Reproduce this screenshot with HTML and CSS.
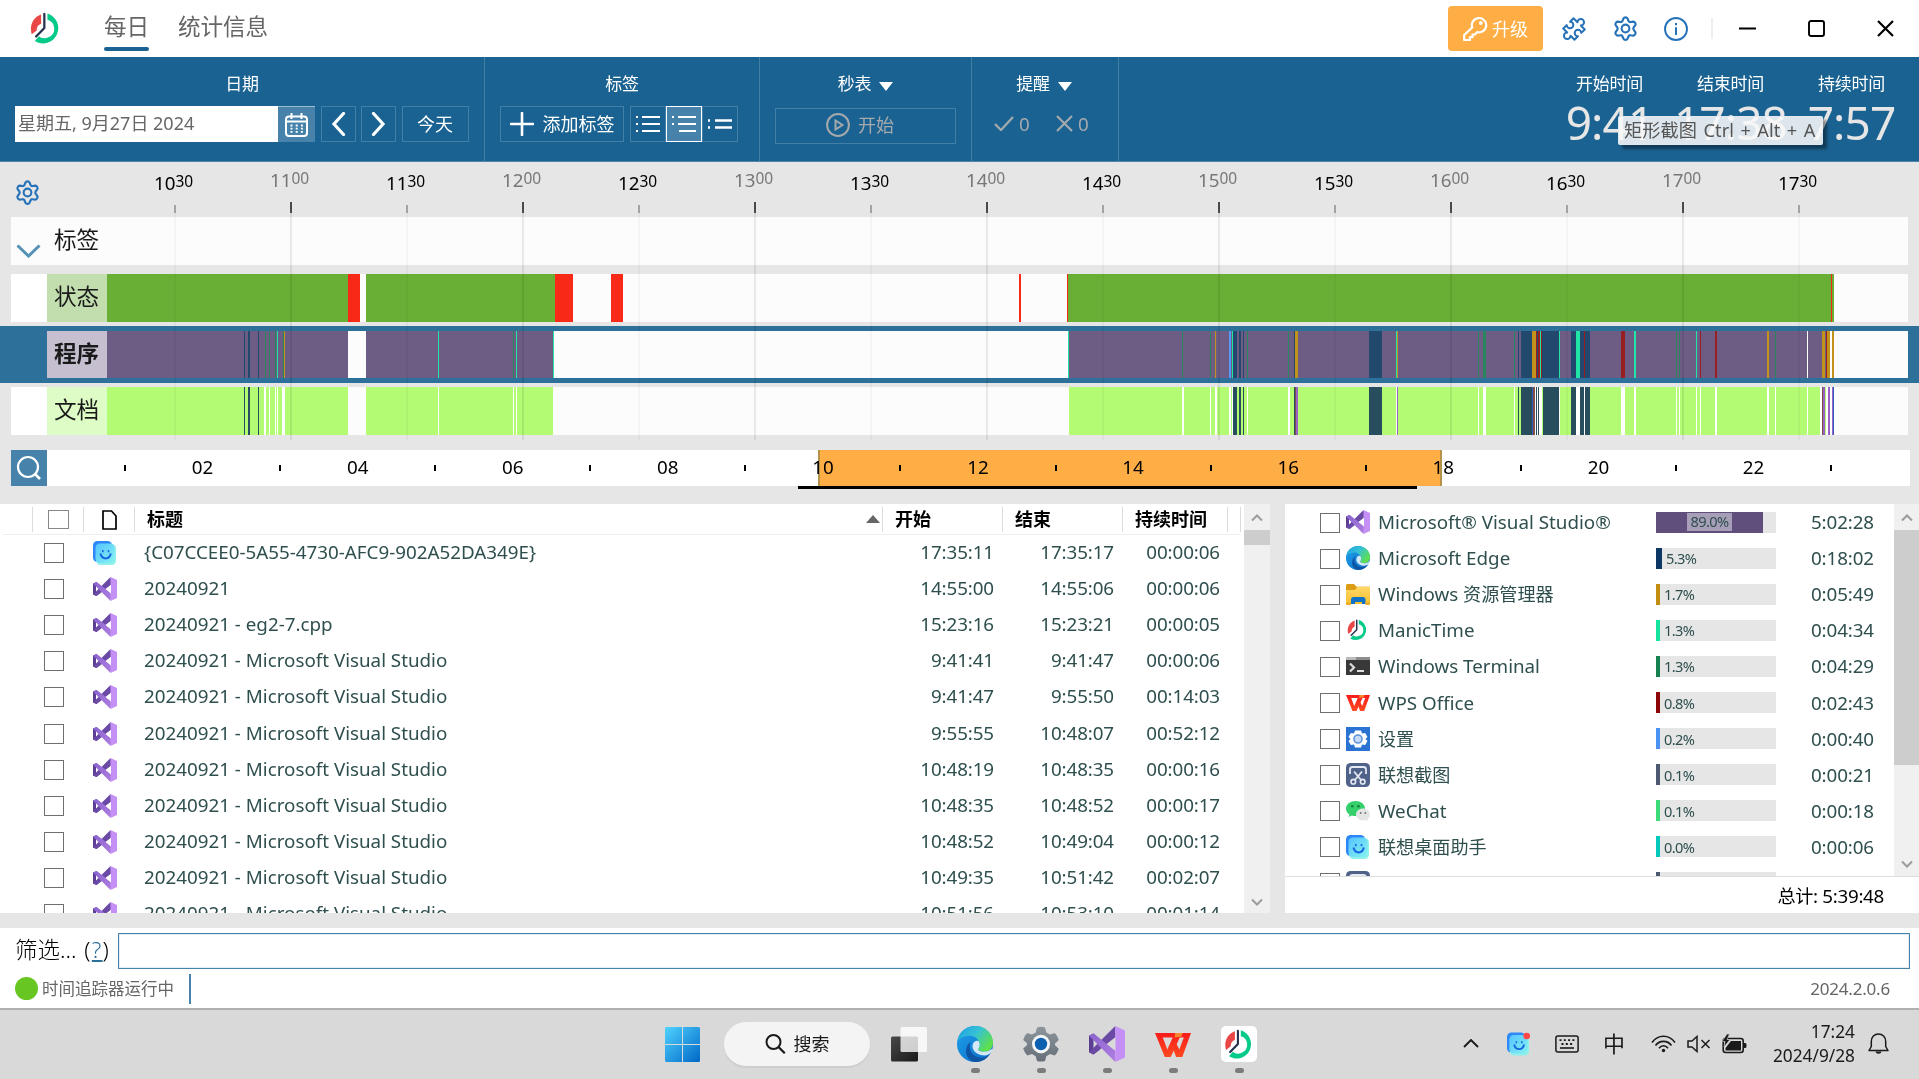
FILE: index.html
```html
<!DOCTYPE html>
<html lang="zh-CN">
<head>
<meta charset="utf-8">
<title>ManicTime</title>
<link rel="stylesheet" href="styles.css">
</head>
<body>
<svg class="defs" width="0" height="0" aria-hidden="true">
  <defs>
    <linearGradient id="g-edge1" x1="0" y1="0" x2="1" y2=".6"><stop offset="0" stop-color="#1b9de2"/><stop offset=".5" stop-color="#35c1d6"/><stop offset="1" stop-color="#5fe04b"/></linearGradient>
    <linearGradient id="g-edge2" x1="0" y1="0" x2="1" y2="1"><stop offset="0" stop-color="#1fa0ea"/><stop offset="1" stop-color="#0a6cc8"/></linearGradient>
    <linearGradient id="g-win" x1="0" y1="0" x2="1" y2="1"><stop offset="0" stop-color="#4fd3ff"/><stop offset="1" stop-color="#0067c6"/></linearGradient>
    <linearGradient id="g-folder" x1="0" y1="0" x2="0" y2="1"><stop offset="0" stop-color="#ffd867"/><stop offset="1" stop-color="#f9be2e"/></linearGradient>
    <linearGradient id="g-smile" x1="0" y1="0" x2="1" y2="1"><stop offset="0" stop-color="#55c3ff"/><stop offset="1" stop-color="#86f3f0"/></linearGradient>
    <linearGradient id="g-vs" x1="0" y1="0" x2="1" y2="1"><stop offset="0" stop-color="#8a63cf"/><stop offset="1" stop-color="#b07fe0"/></linearGradient>
    <linearGradient id="g-wps" x1="0" y1="0" x2="0" y2="1"><stop offset="0" stop-color="#f81b1b"/><stop offset="1" stop-color="#ff4a20"/></linearGradient>
    <linearGradient id="g-cog" x1="0" y1="0" x2="0" y2="1"><stop offset="0" stop-color="#8d969c"/><stop offset="1" stop-color="#666f78"/></linearGradient>
    <linearGradient id="g-dark" x1="0" y1="0" x2="1" y2="1"><stop offset="0" stop-color="#484848"/><stop offset="1" stop-color="#181818"/></linearGradient>
  </defs>
  <symbol id="manic" viewBox="0 0 32 34">
    <path d="M18 1.500A15.800 15.800 0 1 1 5 30L9.200 25C12 27.500 16 27.500 19 26A9.500 9.500 0 0 0 18 8z" fill="#04ca8a"/>
    <path d="M11.500 2.500C2.500 5.500-.8 15 1.800 23L7 19C6.800 15.500 8.300 13 11.500 12z" fill="#ea4747"/>
    <path d="M14.800 2v14.500L6.300 25.200" fill="none" stroke="#25304f" stroke-width="2.300" stroke-linecap="round"/>
  </symbol>
  <symbol id="vs" viewBox="0 0 24 24">
    <path d="M0 6.500L3.500 5 7.500 8.800V15.500L3.500 19 0 17.500z" fill="#5c3f92"/>
    <path d="M3 8.500v7l3.600-3.500z" fill="#fff"/>
    <path d="M0 17.500L17.500 0 19 7.500 3.500 19z" fill="#6b4aa5"/>
    <path d="M0 6.500L3.500 5 19 16.500 17.500 24z" fill="url(#g-vs)"/>
    <path d="M17.500 0L24 3v18l-6.500 3z" fill="#c490f5"/>
    <path d="M18 7.800v8.600L12.500 12z" fill="#fff"/>
  </symbol>
  <symbol id="edge" viewBox="0 0 24 24">
    <circle cx="12" cy="12" r="12" fill="url(#g-edge2)"/>
    <path d="M.2 10.500C1.300 3.800 6.500 0 12.200 0 19 0 24 5 24 11c0 3.800-2.600 6.200-6 6.200-2.600 0-4-1-3.700-2 .9-1 1-2 .8-3C14.700 8 11 6.300 8 6.500 4.500 6.700 1.500 8.300.2 10.500z" fill="url(#g-edge1)"/>
    <path d="M8.500 13c-.4 5 4 8.500 8.500 8 2.500-.3 4.300-1.500 5.300-3.200C20.500 21.800 16.500 24 12 24 8 23.500 5.500 19.500 6.200 15.500 6.500 13 7.800 11 9.800 10.300 9 11 8.600 12 8.500 13z" fill="#0f55a5"/>
    <path d="M14.300 10c1.200 1.700 1.100 3.800 0 5.200-.5 1.200 1.200 2 3.700 2 2 0 4-.6 5-2l.4 1.200c-1.300 3-4.500 3.800-7.500 3-4-.9-6.800-4.500-5-8 .7-1.300 2-2 3.400-1.400z" fill="#fff" opacity=".82"/>
  </symbol>
  <symbol id="folder" viewBox="0 0 24 24">
    <path d="M0 3.500C0 2.500.8 2 1.600 2H8l2.500 2.700H24v6H0z" fill="#dc9c14"/>
    <path d="M0 8h9l2.500-3.300H24V22H0z" fill="url(#g-folder)"/>
    <path d="M5 22v-4.500C5 16 6 15 7.500 15h9.500c1.500 0 2.500 1 2.500 2.500V22h-3.500v-2H9v2z" fill="#1272c4"/>
    <path d="M0 20.500h5V23H0zM19.500 20.500H24V23h-4.500z" fill="#ecae2c"/>
  </symbol>
  <symbol id="term" viewBox="0 0 24 24">
    <path d="M0 4.500C0 3.500.6 3 1.500 3h21c.9 0 1.500.5 1.500 1.500V21H0z" fill="#383838"/>
    <path d="M0 3h24v3H0z" fill="#8d8d8d"/><path d="M0 3h10v3H0z" fill="#bbb"/>
    <path d="M4 9.500l4 4-4 4" fill="none" stroke="#ddd" stroke-width="2.200"/><path d="M11 17h7" stroke="#ddd" stroke-width="2"/>
  </symbol>
  <symbol id="wps" viewBox="0 0 24 16">
    <path d="M0 0h17.500l-.8 3H5.200l3 8L11.800 3h4.700L10.500 16H6.500z" fill="url(#g-wps)"/>
    <path d="M11 5.500L13.500 0H24l-5.800 16h-4.100L11.600 9.500l1.800-4 2.800 5.500 3-8h-4.600l-1.400 3z" fill="url(#g-wps)"/>
    <path d="M13.500 0h5l-1 2.500-4.500.5z" fill="#f9862e"/>
  </symbol>
  <symbol id="sett" viewBox="0 0 24 24">
    <path d="M0 0h24v24H0z" fill="#2b73d2"/>
    <path d="M9 3.500h6l1 3 3.200-.6 2.300 4.100-2 2 2 2-2.300 4.100-3.200-.6-1 3H9l-1-3-3.200.6L2.500 14l2-2-2-2 2.300-4.100 3.200.6z" fill="#fff"/>
    <circle cx="12" cy="12" r="4" fill="#c9dbf4" stroke="#5e94de" stroke-width="1.600"/>
  </symbol>
  <symbol id="snip" viewBox="0 0 24 24">
    <rect width="24" height="24" rx="4.500" fill="#50618a"/>
    <path d="M4 11V6.500C4 5 5 4 6.500 4h11C19 4 20 5 20 6.500V11M8 8.500l7.500 9M16 8.500l-7.500 9" fill="none" stroke="#e4e9f2" stroke-width="1.800"/>
    <circle cx="7.300" cy="18.700" r="2.300" fill="none" stroke="#e4e9f2" stroke-width="1.600"/><circle cx="16.700" cy="18.700" r="2.300" fill="none" stroke="#e4e9f2" stroke-width="1.600"/>
  </symbol>
  <symbol id="wechat" viewBox="0 0 24 24">
    <path d="M9.500 2C4.500 2 0 5 0 9.500c0 2.600 1.300 4.500 3.400 5.900L2.500 18l3.300-1.600c1.200.4 2.400.6 3.700.6 5 0 9.500-3 9.500-7.500S14.500 2 9.500 2z" fill="#35cf6c"/>
    <path d="M17 9.500c-3.700 0-7 2.500-7 6s3.300 5.800 7 5.800c.9 0 1.700-.1 2.500-.3l2.600 1.200-.6-2.200c1.600-1 2.500-2.600 2.500-4.500 0-3.500-3.300-6-7-6z" fill="#e4e6e5"/>
    <circle cx="6.300" cy="7.300" r="1.300" fill="#16803c"/><circle cx="12.500" cy="7.300" r="1.300" fill="#16803c"/><circle cx="14.700" cy="14" r="1" fill="#777"/><circle cx="19.300" cy="14" r="1" fill="#777"/>
  </symbol>
  <symbol id="smile" viewBox="0 0 24 24">
    <rect x="0" y="0" width="19" height="21" rx="4.500" fill="#2f88f8"/>
    <rect x="3" y="3" width="20" height="21" rx="4.500" fill="#90f0ea"/>
    <rect x="2.500" y="2.500" width="19" height="19.500" rx="4.500" fill="url(#g-smile)"/>
    <path d="M7.500 12.500c1.300 6.500 9 6.500 10.300 0" fill="none" stroke="#1765df" stroke-width="2"/>
    <path d="M9.800 9v2.200M15.500 9v2.200" stroke="#1765df" stroke-width="1.600"/>
  </symbol>
  <symbol id="gear" viewBox="0 0 24 24">
    <path d="M10.300 1.800c.5-1.100 2.900-1.100 3.400 0l1 2.300c.3.600 1 1 1.700.9l2.500-.3c1.200-.1 2.400 2 1.700 3l-1.500 2c-.4.700-.4 1.400 0 2l1.500 2.100c.7 1-.5 3.100-1.700 3l-2.500-.3c-.7-.1-1.400.3-1.700.9l-1 2.300c-.5 1.100-2.900 1.100-3.400 0l-1-2.300c-.3-.6-1-1-1.700-.9l-2.500.3c-1.200.1-2.400-2-1.700-3l1.500-2.100c.4-.6.4-1.300 0-2l-1.500-2c-.7-1 .5-3.100 1.700-3l2.500.3c.7.100 1.400-.3 1.700-.9z" transform="translate(-1.200 .3) scale(1.100)" fill="none" stroke="#2672b8" stroke-width="1.900"/>
    <circle cx="12" cy="12" r="3.700" fill="none" stroke="#2672b8" stroke-width="2"/>
  </symbol>
  <symbol id="up" viewBox="0 0 12 8"><path d="M1 6.500L6 1.500l5 5" fill="none" stroke="#9c9c9c" stroke-width="2"/></symbol>
  <symbol id="down" viewBox="0 0 12 8"><path d="M1 1.500L6 6.500l5-5" fill="none" stroke="#9c9c9c" stroke-width="2"/></symbol>
  <symbol id="caret" viewBox="0 0 14 9"><path d="M0 0h14L7 9z" fill="#fff"/></symbol>
</svg>

<header class="titlebar">
  <svg class="logo" width="31" height="33"><use href="#manic"/></svg>
  <nav class="tabs"><a class="tab tab-on">每日</a><a class="tab">统计信息</a></nav>
  <div class="title-actions">
    <button class="upgrade">
      <svg width="25" height="25" viewBox="0 0 25 25" fill="none" stroke="#fff" stroke-width="2.200" stroke-linejoin="round"><path d="M9.200 11.500a7.200 7.200 0 1 1 4.800 4.600l-2 2.400H9.500v2.700H7V24H1.200v-5z"/><circle cx="17.800" cy="7" r=".8" fill="#fff"/></svg>
      <span>升级</span>
    </button>
    <svg class="t-ico" width="24" height="24" viewBox="0 0 24 24" fill="none" stroke="#2672b8" stroke-width="1.500" stroke-linejoin="round"><path transform="translate(12 12) rotate(45) scale(1.320) translate(-12 -12)" d="M6 6.500h4.200a2.500 2.500 0 1 1 3.600 0H18v3.700a2.500 2.500 0 1 0 0 3.600v3.700h-4.200a2.500 2.500 0 1 1-3.600 0H6v-3.700a2.500 2.500 0 1 0 0-3.600z"/></svg>
    <svg class="t-ico" width="25" height="25"><use href="#gear"/></svg>
    <svg class="t-ico" width="24" height="24" viewBox="0 0 24 24"><circle cx="12" cy="12" r="11" fill="none" stroke="#2672b8" stroke-width="1.900"/><path d="M12 6v2.200M12 10.200V18" stroke="#2672b8" stroke-width="2"/></svg>
    <span class="t-sep"></span>
    <svg class="w-min" width="17" height="17" viewBox="0 0 17 17"><path d="M0 8.500h17" stroke="#000" stroke-width="2"/></svg>
    <svg class="w-max" width="17" height="17" viewBox="0 0 17 17"><rect x="1" y="1" width="15" height="15" rx="2" fill="none" stroke="#000" stroke-width="1.900"/></svg>
    <svg class="w-close" width="17" height="17" viewBox="0 0 17 17"><path d="M1 1l15 15M16 1L1 16" stroke="#000" stroke-width="2.200"/></svg>
  </div>
</header>

<section class="ribbon">
  <div class="group g-date">
    <h3>日期</h3>
    <div class="controls">
      <div class="date">星期五, 9月27日 2024</div>
      <button class="cal"><svg width="23" height="24" viewBox="0 0 23 24"><rect x="1" y="3.500" width="21" height="19.500" rx="3" fill="none" stroke="#fff" stroke-width="2"/><path d="M1 8.500h21M6.500 0v6M16.500 0v6" stroke="#fff" stroke-width="2"/><path d="M5.500 12.500h12.500M5.500 15.700h12.500M5.500 18.900h12.500" stroke="#fff" stroke-width="1.800" stroke-dasharray="2 3.200"/></svg></button>
      <button class="rb nav"><svg width="15" height="24" viewBox="0 0 15 24"><path d="M12.500 1.500L3 12l9.500 10.500" fill="none" stroke="#fff" stroke-width="3.200" stroke-linecap="round"/></svg></button>
      <button class="rb nav"><svg width="15" height="24" viewBox="0 0 15 24"><path d="M2.500 1.500L12 12 2.500 22.500" fill="none" stroke="#fff" stroke-width="3.200" stroke-linecap="round"/></svg></button>
      <button class="rb today">今天</button>
    </div>
  </div>
  <div class="group g-tags">
    <h3>标签</h3>
    <div class="controls">
      <button class="rb add"><svg width="24" height="24" viewBox="0 0 24 24"><path d="M12 1v22M1 12h22" stroke="#fff" stroke-width="2.600" stroke-linecap="round"/></svg><span>添加标签</span></button>
      <div class="views">
        <button><svg width="26" height="20" viewBox="0 0 26 20" stroke="#fff" stroke-width="2.200"><path d="M7 3h18M7 10h18M7 17h18"/><path d="M1 3h2M1 10h2M1 17h2"/></svg></button>
        <button class="on"><svg width="26" height="20" viewBox="0 0 26 20" stroke="#fff" stroke-width="2.200"><path d="M7 3h18M7 10h18M8 17h17"/><path d="M1 3h2M1 10h2"/></svg></button>
        <button><svg width="26" height="20" viewBox="0 0 26 20" stroke="#fff" stroke-width="2.400"><path d="M8 6.500h17M8 13.500h17"/><path d="M1 6.500h2M1 13.500h2"/></svg></button>
      </div>
    </div>
  </div>
  <div class="group g-stop">
    <h3>秒表<svg width="14" height="9"><use href="#caret"/></svg></h3>
    <div class="controls">
      <button class="rb start"><svg width="24" height="24" viewBox="0 0 24 24" fill="none" stroke="#a4a9ad" stroke-width="2"><circle cx="12" cy="12" r="10.900"/><path d="M9.500 7.500v9l7-4.500z"/></svg><span>开始</span></button>
    </div>
  </div>
  <div class="group g-remind">
    <h3>提醒<svg width="14" height="9"><use href="#caret"/></svg></h3>
    <div class="controls counts">
      <svg width="20" height="15" viewBox="0 0 20 15"><path d="M1 8l6 6L19 1" fill="none" stroke="#a4a9ad" stroke-width="2.300"/></svg><span>0</span>
      <svg class="cross" width="17" height="17" viewBox="0 0 17 17"><path d="M1 1l15 15M16 1L1 16" stroke="#a4a9ad" stroke-width="2.200"/></svg><span>0</span>
    </div>
  </div>
  <div class="totals">
    <div class="total"><h3>开始时间</h3><b>9:41</b></div>
    <div class="total"><h3>结束时间</h3><b>17:38</b></div>
    <div class="total"><h3>持续时间</h3><b>7:57</b></div>
  </div>
  <div class="tip">矩形截图 Ctrl + Alt + A</div>
</section>

<section class="timeline">
  <div class="axis">
    <svg class="axis-gear" width="25" height="25"><use href="#gear"/></svg>
    <div class="mark">10<i>30</i></div><div class="mark hour">11<i>00</i></div><div class="mark">11<i>30</i></div><div class="mark hour">12<i>00</i></div><div class="mark">12<i>30</i></div><div class="mark hour">13<i>00</i></div><div class="mark">13<i>30</i></div><div class="mark hour">14<i>00</i></div><div class="mark">14<i>30</i></div><div class="mark hour">15<i>00</i></div><div class="mark">15<i>30</i></div><div class="mark hour">16<i>00</i></div><div class="mark">16<i>30</i></div><div class="mark hour">17<i>00</i></div><div class="mark">17<i>30</i></div>
  </div>
  <div class="lane l-tags">
    <div class="lane-pad"><svg width="25" height="14" viewBox="0 0 25 14"><path d="M1.500 1.500L12.500 12l11-10.500" fill="none" stroke="#5590b5" stroke-width="3"/></svg></div>
    <div class="lane-name">标签</div>
  </div>
  <div class="lane l-state">
    <div class="lane-pad"></div><div class="lane-name">状态</div>
    <svg class="segs" width="1801" height="48" viewBox="107 0 1801 48" preserveAspectRatio="none" shape-rendering="crispEdges">
      <path fill="#6aaf35" d="M107 0h241v48H107zM366 0h189v48H366zM1068 0h766v48H1068z"/>
      <path fill="#f82a17" d="M348 0h12v48H348zM555 0h18v48H555zM611 0h12v48H611zM1019 0h2v48H1019zM1067 0h1v48H1067zM1831 0h1v48H1831z"/>
    </svg>
  </div>
  <div class="lane l-prog">
    <div class="lane-pad"></div><div class="lane-name">程序</div>
    <svg class="segs" width="1801" height="47" viewBox="107 0 1801 47" preserveAspectRatio="none" shape-rendering="crispEdges">
      <path fill="#6d5c84" d="M107 0h241v47H107zM366 0h187v47H366zM1069 0h765v47H1069z"/>
      <path fill="#22486d" d="M244 0h1v47h-1zM248 0h2v47h-2zM258 0h1v47h-1zM1233 0h4v47h-4zM1239 0h2v47h-2zM1243 0h1v47h-1zM1294 0h1v47h-1zM1369 0h13v47h-13zM1518 0h1v47h-1zM1521 0h38v47h-38zM1571 0h19v47h-19z"/>
      <path fill="#27865c" d="M265 0h1v47h-1zM269 0h1v47h-1zM275 0h1v47h-1zM283 0h1v47h-1zM513 0h1v47h-1zM1182 0h1v47h-1zM1210 0h1v47h-1zM1247 0h1v47h-1zM1288 0h1v47h-1zM1478 0h1v47h-1zM1483 0h3v47h-3zM1514 0h1v47h-1zM1676 0h1v47h-1zM1679 0h1v47h-1zM1775 0h1v47h-1z"/>
      <path fill="#20e5a5" d="M277 0h1v47h-1zM438 0h1v47h-1zM516 0h1v47h-1zM553 0h1v47h-1zM1068 0h1v47h-1zM1232 0h1v47h-1zM1396 0h1v47h-1zM1540 0h1v47h-1zM1559 0h1v47h-1zM1576 0h4v47h-4zM1634 0h2v47h-2zM1696 0h1v47h-1z"/>
      <path fill="#c3921b" d="M284 0h1v47h-1zM1215 0h1v47h-1zM1295 0h3v47h-3zM1397 0h1v47h-1zM1532 0h4v47h-4zM1767 0h2v47h-2zM1822 0h3v47h-3zM1827 0h3v47h-3z"/>
      <path fill="#971f22" d="M1536 0h1v47h-1zM1538 0h2v47h-2zM1541 0h1v47h-1zM1584 0h1v47h-1zM1621 0h4v47h-4zM1700 0h1v47h-1zM1715 0h2v47h-2zM1826 0h1v47h-1z"/>
      <path fill="#529af5" d="M1229 0h2v47h-2z"/>
      <path fill="#fff" d="M1807 0h1v47h-1zM1830 0h4v47h-4z"/><path fill="#c3921b" d="M1832 0h2v47h-2z"/>
    </svg>
  </div>
  <div class="lane l-docs">
    <div class="lane-pad"></div><div class="lane-name">文档</div>
    <svg class="segs" width="1801" height="48" viewBox="107 0 1801 48" preserveAspectRatio="none" shape-rendering="crispEdges">
      <path fill="#b4fb74" d="M107 0h241v48H107zM366 0h187v48H366zM1069 0h765v48H1069z"/>
      <path fill="#fff" d="M264 0h2v48h-2zM269 0h1v48h-1zM275 0h1v48h-1zM277 0h1v48h-1zM282 0h3v48h-3zM438 0h1v48h-1zM513 0h1v48h-1zM516 0h1v48h-1zM1182 0h2v48h-2zM1210 0h1v48h-1zM1215 0h2v48h-2zM1229 0h2v48h-2zM1232 0h1v48h-1zM1247 0h1v48h-1zM1288 0h2v48h-2zM1396 0h1v48h-1zM1478 0h1v48h-1zM1483 0h3v48h-3zM1514 0h1v48h-1zM1535 0h7v48h-7zM1559 0h1v48h-1zM1576 0h4v48h-4zM1584 0h1v48h-1zM1621 0h4v48h-4zM1634 0h2v48h-2zM1676 0h1v48h-1zM1679 0h1v48h-1zM1696 0h1v48h-1zM1700 0h1v48h-1zM1715 0h2v48h-2zM1767 0h2v48h-2zM1775 0h1v48h-1zM1807 0h1v48h-1zM1820 0h2v48h-2zM1826 0h6v48h-6z"/>
      <path fill="#284d5d" d="M244 0h1v48h-1zM248 0h2v48h-2zM258 0h1v48h-1zM1233 0h4v48h-4zM1239 0h2v48h-2zM1243 0h1v48h-1zM1294 0h1v48h-1zM1369 0h13v48h-13zM1518 0h1v48h-1zM1521 0h11v48h-11zM1536 0h1v48h-1zM1538 0h1v48h-1zM1543 0h16v48h-16zM1571 0h5v48h-5zM1580 0h4v48h-4zM1585 0h5v48h-5z"/>
      <path fill="#9a62c6" d="M1296 0h2v48h-2zM1397 0h1v48h-1zM1823 0h2v48h-2zM1828 0h2v48h-2zM1832 0h1v48h-1z"/>
      <path fill="#7c4f49" d="M1295 0h1v48h-1zM1533 0h2v48h-2zM1822 0h1v48h-1z"/>
      <path fill="#2f5bc0" d="M1532 0h1v48h-1zM1833 0h1v48h-1z"/>
    </svg>
  </div>
  <svg class="gridlines" width="1919" height="238" viewBox="0 202 1919 238" shape-rendering="crispEdges">
    <path stroke="#4a4a4a" stroke-width="2" d="M291 202v11M523 202v11M755 202v11M987 202v11M1219 202v11M1451 202v11M1683 202v11"/>
    <path stroke="#a3a3a3" stroke-width="2" d="M175 205v8M407 205v8M639 205v8M871 205v8M1103 205v8M1335 205v8M1567 205v8M1799 205v8"/>
    <path stroke="#000" stroke-opacity=".08" stroke-width="2" d="M291 213v227M523 213v227M755 213v227M987 213v227M1219 213v227M1451 213v227M1683 213v227"/>
    <path stroke="#000" stroke-opacity=".03" stroke-width="2" d="M175 213v227M407 213v227M639 213v227M871 213v227M1103 213v227M1335 213v227M1567 213v227M1799 213v227"/>
  </svg>
</section>

<section class="dayscale">
  <button class="zoom"><svg width="26" height="26" viewBox="0 0 26 26"><circle cx="12" cy="12" r="10" fill="none" stroke="#fff" stroke-width="2.200"/><path d="M18.500 18.500L24 24" stroke="#fff" stroke-width="2.600"/></svg></button>
  <div class="strip">
    <span>02</span><span>04</span><span>06</span><span>08</span><span>10</span><span>12</span><span>14</span><span>16</span><span>18</span><span>20</span><span>22</span><span class="end"></span>
    <div class="range"></div><div class="active-day"></div>
  </div>
</section>

<main class="panes">
  <section class="entries">
    <div class="table">
      <div class="thead"><span class="c0"></span><span class="c1"><i class="box"></i></span><span class="c2"><svg width="15" height="20" viewBox="0 0 15 20"><path d="M1 1h8.500L14 6v13H1z" fill="none" stroke="#000" stroke-width="1.700"/></svg></span><span class="c3">标题<svg width="14" height="8"><path d="M0 8L7 0l7 8z" fill="#666"/></svg></span><span class="c4">开始</span><span class="c5">结束</span><span class="c6">持续时间</span><span class="c7"></span></div>
      <div class="tr"><i class="box"></i><svg class="app"><use href="#smile"/></svg><span>{C07CCEE0-5A55-4730-AFC9-902A52DA349E}</span><time>17:35:11</time><time>17:35:17</time><time>00:00:06</time></div>
      <div class="tr"><i class="box"></i><svg class="app"><use href="#vs"/></svg><span>20240921</span><time>14:55:00</time><time>14:55:06</time><time>00:00:06</time></div>
      <div class="tr"><i class="box"></i><svg class="app"><use href="#vs"/></svg><span>20240921 - eg2-7.cpp</span><time>15:23:16</time><time>15:23:21</time><time>00:00:05</time></div>
      <div class="tr"><i class="box"></i><svg class="app"><use href="#vs"/></svg><span>20240921 - Microsoft Visual Studio</span><time>9:41:41</time><time>9:41:47</time><time>00:00:06</time></div>
      <div class="tr"><i class="box"></i><svg class="app"><use href="#vs"/></svg><span>20240921 - Microsoft Visual Studio</span><time>9:41:47</time><time>9:55:50</time><time>00:14:03</time></div>
      <div class="tr"><i class="box"></i><svg class="app"><use href="#vs"/></svg><span>20240921 - Microsoft Visual Studio</span><time>9:55:55</time><time>10:48:07</time><time>00:52:12</time></div>
      <div class="tr"><i class="box"></i><svg class="app"><use href="#vs"/></svg><span>20240921 - Microsoft Visual Studio</span><time>10:48:19</time><time>10:48:35</time><time>00:00:16</time></div>
      <div class="tr"><i class="box"></i><svg class="app"><use href="#vs"/></svg><span>20240921 - Microsoft Visual Studio</span><time>10:48:35</time><time>10:48:52</time><time>00:00:17</time></div>
      <div class="tr"><i class="box"></i><svg class="app"><use href="#vs"/></svg><span>20240921 - Microsoft Visual Studio</span><time>10:48:52</time><time>10:49:04</time><time>00:00:12</time></div>
      <div class="tr"><i class="box"></i><svg class="app"><use href="#vs"/></svg><span>20240921 - Microsoft Visual Studio</span><time>10:49:35</time><time>10:51:42</time><time>00:02:07</time></div>
      <div class="tr"><i class="box"></i><svg class="app"><use href="#vs"/></svg><span>20240921 - Microsoft Visual Studio</span><time>10:51:56</time><time>10:53:10</time><time>00:01:14</time></div>
    </div>
    <div class="scroll"><svg width="12" height="8"><use href="#up"/></svg><i class="thumb"></i><svg width="12" height="8"><use href="#down"/></svg></div>
  </section>

  <section class="summary">
    <div class="sum-body">
      <div class="apps">
        <div class="ar"><i class="box"></i><svg class="app"><use href="#vs"/></svg><span>Microsoft® Visual Studio®</span><div class="bar big"><i style="width:107px;background:#604f7c"></i><b>89.0%</b></div><time>5:02:28</time></div>
        <div class="ar"><i class="box"></i><svg class="app"><use href="#edge"/></svg><span>Microsoft Edge</span><div class="bar"><i style="width:6px;background:#0d3765"></i><b>5.3%</b></div><time>0:18:02</time></div>
        <div class="ar"><i class="box"></i><svg class="app"><use href="#folder"/></svg><span>Windows <em>资源管理器</em></span><div class="bar"><i style="width:4px;background:#c18e10"></i><b>1.7%</b></div><time>0:05:49</time></div>
        <div class="ar"><i class="box"></i><svg class="app app-manic"><use href="#manic"/></svg><span>ManicTime</span><div class="bar"><i style="width:4px;background:#14e4a0"></i><b>1.3%</b></div><time>0:04:34</time></div>
        <div class="ar"><i class="box"></i><svg class="app"><use href="#term"/></svg><span>Windows Terminal</span><div class="bar"><i style="width:4px;background:#17804f"></i><b>1.3%</b></div><time>0:04:29</time></div>
        <div class="ar"><i class="box"></i><svg class="app"><use href="#wps"/></svg><span>WPS Office</span><div class="bar"><i style="width:4px;background:#8e0508"></i><b>0.8%</b></div><time>0:02:43</time></div>
        <div class="ar"><i class="box"></i><svg class="app"><use href="#sett"/></svg><span><em>设置</em></span><div class="bar"><i style="width:4px;background:#4a93f5"></i><b>0.2%</b></div><time>0:00:40</time></div>
        <div class="ar"><i class="box"></i><svg class="app"><use href="#snip"/></svg><span><em>联想截图</em></span><div class="bar"><i style="width:4px;background:#4c5870"></i><b>0.1%</b></div><time>0:00:21</time></div>
        <div class="ar"><i class="box"></i><svg class="app"><use href="#wechat"/></svg><span>WeChat</span><div class="bar"><i style="width:4px;background:#3cda78"></i><b>0.1%</b></div><time>0:00:18</time></div>
        <div class="ar"><i class="box"></i><svg class="app"><use href="#smile"/></svg><span><em>联想桌面助手</em></span><div class="bar"><i style="width:4px;background:#04c8bd"></i><b>0.0%</b></div><time>0:00:06</time></div>
        <div class="ar"><i class="box"></i><svg class="app"><use href="#snip"/></svg><span></span><div class="bar"><i style="width:4px;background:#4c5870"></i></div><time></time></div>
      </div>
      <div class="scroll s2"><svg width="12" height="8"><use href="#up"/></svg><i class="thumb"></i><svg width="12" height="8"><use href="#down"/></svg></div>
    </div>
    <div class="sum-foot"><em>总计</em>: 5:39:48</div>
  </section>
</main>

<section class="filter"><label>筛选... <span>(<a>?</a>)</span></label><div class="filter-input"></div></section>
<footer class="status"><i class="dot"></i><span>时间追踪器运行中</span><i class="bar-sep"></i><span class="ver">2024.2.0.6</span></footer>

<div class="taskbar">
  <div class="dock">
    <svg class="win" width="35" height="35" viewBox="0 0 35 35"><path fill="url(#g-win)" d="M1.500 0H17v17H0V1.500Q0 0 1.500 0zM18 0h15.500Q35 0 35 1.500V17H18zM0 18h17v17H1.500Q0 35 0 33.500zM18 18h17v15.500Q35 35 33.500 35H18z"/></svg>
    <div class="search"><svg width="21" height="20" viewBox="0 0 21 20"><circle cx="8.500" cy="8" r="7" fill="none" stroke="#1a1a1a" stroke-width="2"/><path d="M13.500 13l6.300 6.300" stroke="#1a1a1a" stroke-width="2.200"/></svg><span>搜索</span></div>
    <svg class="view" width="36" height="35" viewBox="0 0 36 35"><rect x="0" y="9.500" width="27" height="25" rx="1.500" fill="url(#g-dark)"/><rect x="9.500" y="0" width="26.500" height="25" rx="1.500" fill="#fff" opacity=".78"/></svg>
    <span class="task"><svg width="36" height="36"><use href="#edge"/></svg></span>
    <span class="task"><svg width="36" height="36" viewBox="0 0 36 36"><path d="M14 1.500Q18 .2 22 1.500L23.300 6.500 27 8.600 31.800 7Q34.700 10 35.800 14L32 17.500v1.800l3.800 3.500Q34.500 27 31.800 29.500L27 28l-3.700 2.200L22 35q-4 1.200-8 0l-1.300-4.800L9 28l-4.800 1.500Q1.300 26.500.2 22.500L4 19v-1.800L.2 14Q1.300 9.500 4.200 7L9 8.600l3.700-2.100z" fill="url(#g-cog)"/><ellipse cx="18" cy="18" rx="9" ry="9.300" fill="#f3f5f7"/><circle cx="18" cy="18" r="6.200" fill="#0d60b0"/></svg></span>
    <span class="task"><svg class="vs-task" width="36" height="36" viewBox="0 0 24 24"><path d="M0 6.500L3 5 7.500 8.800V15.500L3 19 0 17.500z" fill="#5c3f92"/><path d="M3 8.800v6.600l3-3.300z" fill="#d9d9d9"/><path d="M0 17.500L17.500 0v7.500L3 19z" fill="#6b4aa5"/><path d="M0 6.500L3 5l14.500 11.500V24z" fill="url(#g-vs)"/><path d="M17.500 0L24 3v18l-6.500 3z" fill="#c490f5"/><path d="M17.500 7.800v8.400L12.300 12z" fill="#d9d9d9"/></svg></span>
    <span class="task"><svg width="36" height="24"><use href="#wps"/></svg></span>
    <span class="task"><span class="tile"><svg width="30" height="31"><use href="#manic"/></svg></span></span>
  </div>
  <div class="tray">
    <svg width="16" height="9" viewBox="0 0 16 9"><path d="M1 8l7-7 7 7" fill="none" stroke="#1a1a1a" stroke-width="1.900"/></svg>
    <svg width="24" height="24" viewBox="0 0 24 24"><use href="#smile" width="23" height="24"/><circle cx="19.700" cy="4" r="3.300" fill="#ff4545"/></svg>
    <svg width="24" height="18" viewBox="0 0 24 18"><rect x=".9" y=".9" width="22.200" height="16" rx="2" fill="none" stroke="#1a1a1a" stroke-width="1.500"/><path d="M4.500 5.200h15.500M6.500 9h11.500" stroke="#1a1a1a" stroke-width="1.800" stroke-dasharray="2 2.300"/><path d="M5 13h14" stroke="#1a1a1a" stroke-width="1.600"/></svg>
    <span class="ime">中</span>
    <svg width="25" height="18" viewBox="0 0 25 18" fill="none" stroke="#1a1a1a" stroke-width="1.600"><path d="M1 7.500C7-.9 18-.9 24 7.500M4.500 10.500c4-5.500 12-5.500 16 0M8 13.200c2.500-3.200 6.500-3.200 9 0"/><circle cx="12.500" cy="15.500" r="1.700" fill="#1a1a1a" stroke="none"/></svg>
    <svg width="24" height="18" viewBox="0 0 24 18" fill="none" stroke="#1a1a1a" stroke-width="1.500"><path d="M1 6h4l5-4.500v15L5 12H1z"/><path d="M14.500 5l8 8M22.500 5l-8 8"/></svg>
    <svg width="25" height="20" viewBox="0 0 25 20"><rect x="1.200" y="4.500" width="20" height="14" rx="2.500" fill="none" stroke="#1a1a1a" stroke-width="1.600"/><path d="M9 7h10v9.500H3.500V14z" fill="#1a1a1a"/><path d="M22 9h1.500q1 0 1 2.500t-1 2.500H22z" fill="#1a1a1a"/><path d="M5 0L0 7.500h3L2 13l6-7.500H5L7.500 0z" fill="#1a1a1a" stroke="#d9d9d9" stroke-width=".6"/></svg>
    <div class="clock"><span>17:24</span><span>2024/9/28</span></div>
    <svg width="21" height="22" viewBox="0 0 21 22"><path d="M1 17.500l2.300-4V8.500C3.300 4 6.500 1 10.500 1s7.200 3 7.200 7.500v5l2.300 4z" fill="none" stroke="#1a1a1a" stroke-width="1.500" stroke-linejoin="round"/><path d="M7.500 18.500c.5 3 5.500 3 6 0z" fill="#1a1a1a"/></svg>
  </div>
</div>
</body>
</html>
```
FILE: styles.css
```css
* { box-sizing: border-box; }
body {
  margin: 0;
  width: 1919px;
  height: 1079px;
  overflow: hidden;
  display: flex;
  flex-direction: column;
  background: #e6e6e6;
  font-family: "Noto Sans", "Noto Sans CJK SC", sans-serif;
  font-size: 18.8px;
  line-height: 24px;
  color: #000;
}
.defs { position: absolute; }
svg { flex: none; display: block; }
i, em { font-style: normal; }
h3 { margin: 0; font-weight: 400; }
button { border: 0; padding: 0; margin: 0; background: none; font: inherit; color: inherit; display: flex; align-items: center; justify-content: center; }

/* title bar */
.titlebar { height: 57px; flex: none; background: #fff; display: flex; align-items: flex-start; padding-left: 30px; }
.logo { margin-top: 12px; }
.tabs { display: flex; gap: 29px; margin-left: 43px; height: 52px; color: #666; font-size: 22.600px; font-weight: 400; }
.tab { line-height: 54px; height: 51px; letter-spacing: -.1px; }
.tab-on { position: relative; }
.tab-on::after { content: ""; position: absolute; left: 0; right: 0; bottom: 0; height: 4px; border-radius: 2px; background: #1a6291; }
.title-actions { margin-left: auto; height: 57px; display: flex; align-items: center; padding-right: 25px; }
.upgrade { width: 95px; height: 45px; border-radius: 4px; background: #ffad45; color: #fff; gap: 4px; font-size: 18px; margin-right: 19px; }
.t-ico { margin-right: 27px; }
.t-ico + .t-ico { margin-right: 26px; }
.t-sep { width: 2px; height: 21px; background: #eee; margin: 0 26px 0 -3px; }
.w-min { margin-right: 52px; }
.w-max { margin-right: 52px; }

/* ribbon */
.ribbon { height: 105px; flex: none; background: #1a6291; border-bottom: 1px solid #4b87ad; display: flex; color: #fff; position: relative; }
.group { border-right: 1px solid #4280a8; padding-top: 15px; display: flex; flex-direction: column; }
.group h3, .total h3 { height: 24px; font-size: 17px; letter-spacing: -.3px; display: flex; justify-content: center; align-items: center; gap: 8px; }
.group h3 svg { margin-top: 4px; }
.controls { display: flex; margin-top: 10px; height: 36px; }
.g-date { width: 485px; }
.g-date .controls { padding-left: 15px; }
.date { width: 263px; height: 36px; background: #fff; color: #666; font-size: 18px; line-height: 34px; padding-left: 3px; }
.cal { width: 37px; background: #4682a9; border-top: 1px solid #9dbdd2; }
.rb { border: 1px solid #4280a8; font-size: 18px; }
.nav { width: 35px; margin-left: 6px; }
.nav + .nav { margin-left: 5px; }
.today { width: 67px; margin-left: 6px; padding-right: 1px; }
.g-tags { width: 275px; }
.g-tags .controls { padding-left: 15px; }
.add { width: 124px; gap: 9px; }
.views { display: flex; margin-left: 6px; }
.views button { width: 36px; border: 1px solid #4280a8; }
.views .on { background: #4682a9; border-color: #fff; }
.g-stop { width: 212px; }
.g-stop .controls { padding-left: 15px; margin-top: 12px; }
.start { width: 181px; color: #a4a9ad; gap: 8px; padding: 0 11px 3px 0; }
.g-remind { width: 147px; }
.g-remind h3 { padding-right: 2px; }
.counts { padding-left: 22px; align-items: center; margin-top: 9px; color: #a4a9ad; height: 37px; }
.counts span { width: 43px; padding-left: 5px; }
.cross { margin-left: -1px; }
.totals { margin-left: auto; padding: 15px 7px 0 0; display: flex; color: #fff; }
.total { display: flex; flex-direction: column; align-items: center; width: 121px; }
.total h3 { white-space: nowrap; }
.total b { font-weight: 400; font-size: 46px; letter-spacing: -.9px; line-height: 54px; margin-top: -1px; color: #e6e6e6; white-space: nowrap; }
.tip { position: absolute; left: 1618px; top: 59px; width: 205px; height: 29px; background: rgba(248,248,248,.88); border: 1px solid rgba(225,232,238,.9); border-radius: 2px; box-shadow: 4px 4px 3px rgba(0,0,0,.4); color: #555; font-size: 18.200px; line-height: 27px; padding-left: 5px; letter-spacing: .1px; word-spacing: 1.500px; white-space: nowrap; }

/* timeline */
.timeline { flex: none; height: 288px; position: relative; }
.axis { height: 55px; display: flex; padding-left: 15px; }
.axis-gear { margin: 18px 77px 0 0; }
.mark { width: 116px; padding: 8px 0 0 37px; font-size: 18.800px; line-height: 26px; display: flex; height: 44px; }
.mark i { font-size: 15.500px; line-height: 22px; }
.mark.hour { padding-top: 5px; color: #777; }
.lane { display: flex; margin: 0 11px 9px; height: 48px; background: #fcfcfc; }
.lane-pad { width: 36px; background: #fff; }
.lane-name { width: 60px; padding-left: 7px; font-size: 22.600px; line-height: 46px; color: #1a1a1a; letter-spacing: -.2px; white-space: nowrap; }
.l-tags .lane-pad { padding: 27px 0 0 5px; background: none; }
.l-state { margin-bottom: 4px; }
.l-state .lane-name { background: #c2deae; }
.l-prog { margin: 0 0 4px; height: 57px; background: #2d7099; padding: 5px 11px 5px 11px; }
.l-prog .lane-pad { background: none; }
.l-prog .lane-name { background: #c6bfd0; font-weight: 700; }
.l-prog .segs { background: #fcfcfc; }
.l-docs .lane-name { background: #defcc6; }
.gridlines { position: absolute; left: 0; top: 40px; }

/* whole-day scale */
.dayscale { flex: none; display: flex; height: 36px; padding: 0 9px 0 11px; }
.zoom { width: 36px; background: #4682a9; }
.strip { flex: 1; background: #fff; display: flex; padding-left: 77px; position: relative; }
.strip span { width: 155.100px; padding-left: 2px; text-align: center; line-height: 34px; background: linear-gradient(#000,#000) 0 center / 2px 6px no-repeat; }
.strip .end { width: 2px; }
.range { position: absolute; left: 771px; top: 0; width: 624px; height: 36px; background: #ffad45; border: solid #b3934a; border-width: 0 2px; mix-blend-mode: multiply; }
.active-day { position: absolute; left: 751px; top: 36px; width: 619px; height: 3px; background: #000; }

/* panes */
.panes { flex: none; display: flex; gap: 15px; margin-top: 18px; height: 409px; }
.entries { width: 1270px; display: flex; background: #fff; overflow: hidden; }
.table { width: 1244px; }
.thead { height: 31px; display: flex; margin: 0 3px; border-bottom: 1px solid #efefef; font-weight: 700; font-size: 18px; padding: 3px 0 2px; }
.thead span { border-right: 1px solid #dcdcdc; display: flex; align-items: center; padding-bottom: 2px; }
.thead .c0 { width: 30px; }
.thead .c1, .thead .c2 { width: 51px; padding-left: 15px; padding-bottom: 0; }
.thead .c2 { padding-left: 18px; }
.thead .c3 { width: 748px; justify-content: space-between; padding-right: 2px; padding-left: 12px; }
.thead .c4, .thead .c5 { width: 120px; padding-left: 12px; }
.thead .c6 { width: 105px; padding-left: 12px; white-space: nowrap; }
.thead .c7 { width: 13px; }
.box { width: 20px; height: 20px; border: 1.500px solid #6f6f6f; background: #fff; display: block; }
.c1 .box { width: 21px; height: 19px; border-color: #888; }
.app { width: 24px; height: 24px; }
.app-manic { width: 23px; height: 22px; }
.tr { display: grid; grid-template-columns: 49px 51px 730px 120px 120px 106px; padding-left: 44px; height: 36.100px; align-items: center; color: #2f4f4f; }
.tr span, .tr time { margin-top: -2px; }
.tr time { text-align: right; letter-spacing: -.1px; }
.scroll { width: 26px; background: #f0f0f0; display: flex; flex-direction: column; align-items: center; padding: 10px 0 7px; }
.thumb { width: 26px; height: 15px; background: #cdcdcd; margin-top: 8px; }
.scroll svg:last-child { margin-top: auto; }
.summary { width: 634px; background: #fff; }
.sum-body { height: 373px; display: flex; overflow: hidden; border-bottom: 1px solid #ddd; }
.apps { width: 609px; }
.ar { display: grid; grid-template-columns: 26px 32px 278px 120px 98px; padding-left: 35px; height: 36.100px; align-items: center; color: #2f4f4f; }
.ar .box { margin-top: 1px; }
.ar em, .sum-foot em { font-size: 18.100px; }
.bar { height: 21px; background: #e6e6e6; display: flex; align-items: center; }
.bar i { height: 21px; }
.bar b { font-weight: 400; font-size: 14.600px; line-height: 20px; letter-spacing: -.6px; margin: 0 0 0 4px; }
.bar.big b { margin-left: -76px; width: 45px; height: 18px; line-height: 17px; text-align: center; background: rgba(255,255,255,.45); }
.ar time { text-align: right; letter-spacing: -.1px; }
.s2 { width: 25px; padding-bottom: 8px; }
.s2 .thumb { height: 235px; }
.sum-foot { text-align: right; padding: 7px 35px 0 0; letter-spacing: -.3px; }

/* filter + status */
.filter { flex: none; height: 44px; margin-top: 15px; background: #fff; display: flex; padding: 5px 9px 0 15px; }
.filter label { width: 103px; font-size: 22.500px; line-height: 34px; white-space: nowrap; font-weight: 300; }
.filter label span { margin-left: 2px; letter-spacing: 1.200px; }
.filter a { color: #2d7099; text-decoration: underline; }
.filter-input { flex: 1; height: 36px; border: 1px solid #4682a9; background: #fff; box-shadow: inset 0 0 0 1px #e3edf3; }
.status { flex: none; height: 36px; background: #fff; display: flex; align-items: center; padding: 0 29px 3px 15px; color: #666; font-size: 16.500px; }
.dot { width: 23px; height: 23px; border-radius: 50%; background: #68c622; margin-right: 4px; }
.bar-sep { width: 2px; height: 30px; background: #4682a9; margin-left: 15px; }
.ver { margin-left: auto; font-size: 17px; letter-spacing: -.2px; }

/* taskbar */
.taskbar { flex: 1; background: #d9d9d9; border-top: 2px solid #b0b0b0; display: flex; padding-left: 665px; }
.dock { display: flex; height: 69px; padding-top: 16px; }
.win { margin-top: 1px; }
.search { width: 146px; height: 44px; margin: -4px 21px 0 24px; border-radius: 22px; background: #f4f4f4; box-shadow: 0 2px 1px #cdcdcd; display: flex; align-items: center; justify-content: center; gap: 8px; font-size: 18px; color: #1a1a1a; }
.view { margin: 1px 30px 0 0; }
.task { width: 36px; height: 47px; margin-right: 30px; display: flex; flex-direction: column; align-items: center; justify-content: space-between; }
.task::after { content: ""; width: 9px; height: 5px; border-radius: 3px; background: #7c7c7c; margin-top: auto; }
.task svg[height="24"] { margin-top: 7px; }
.tile { width: 36px; height: 36px; background: #fff; border-radius: 5px; display: flex; align-items: center; justify-content: center; }
.tray { margin: 0 30px 0 auto; display: flex; align-items: center; height: 67px; color: #1a1a1a; }
.tray > :nth-child(1) { margin-right: 28px; }
.tray > :nth-child(2) { margin-right: 24px; }
.tray > :nth-child(3) { margin-right: 24px; }
.ime { font-size: 22px; width: 22px; margin-right: 26px; margin-top: -2px; }
.tray > :nth-child(5) { margin-right: 11px; }
.tray > :nth-child(6) { margin-right: 11px; }
.clock { width: 108px; margin-right: 13px; text-align: right; display: flex; flex-direction: column; font-size: 17.300px; }
```
